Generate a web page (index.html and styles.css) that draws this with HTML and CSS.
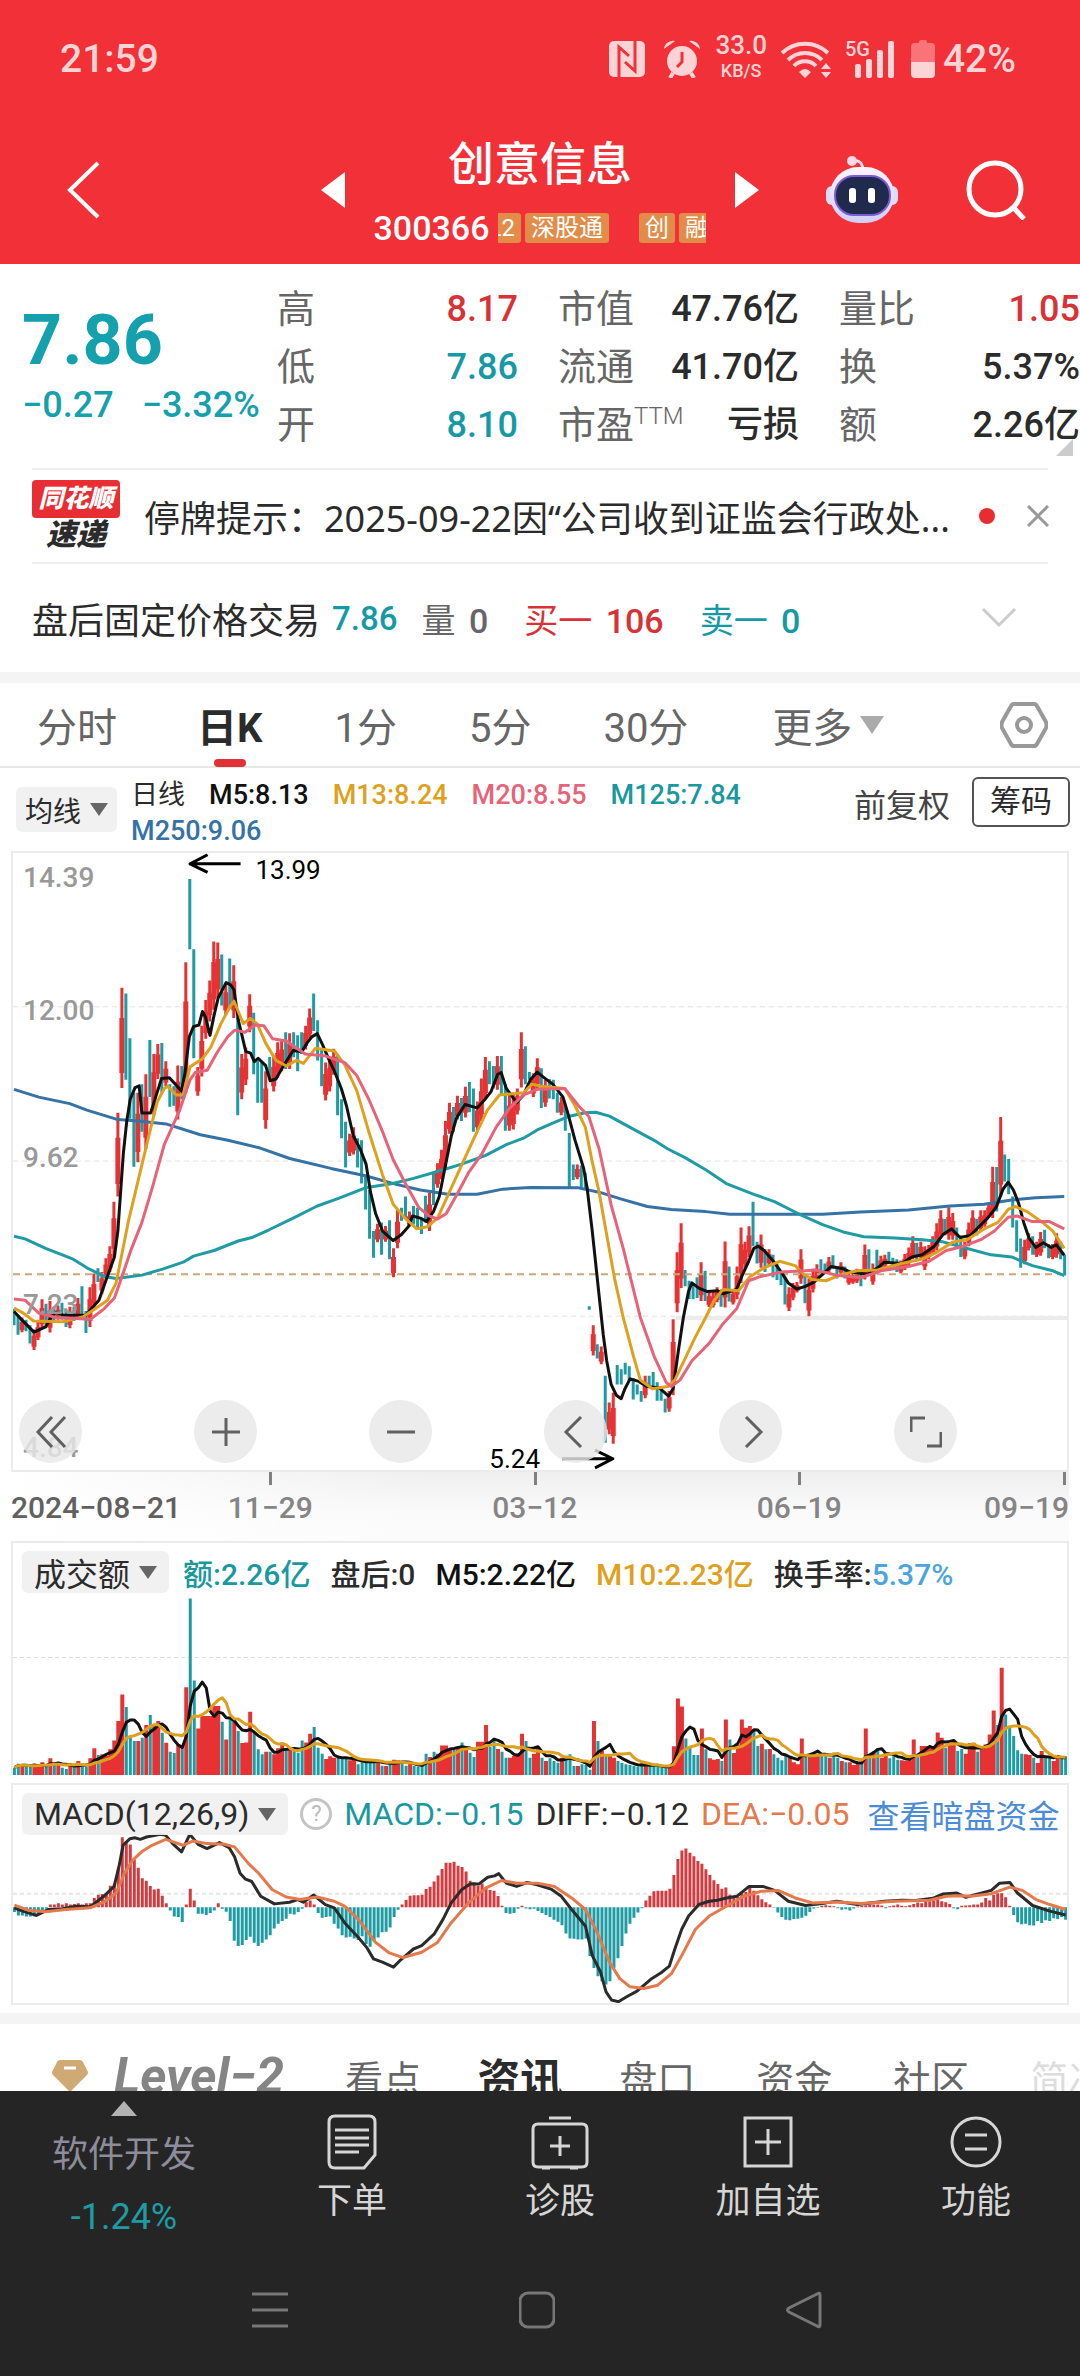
FILE: index.html
```html
<!DOCTYPE html>
<html lang="zh-CN">
<head>
<meta charset="utf-8">
<meta name="viewport" content="width=device-width, initial-scale=1">
<title>创意信息 300366</title>
<link rel="stylesheet" href="styles.css">
</head>
<body>
<header class="top">
  <div class="status">
    <span class="clock">21:59</span>
    <div class="status-icons">
      <svg width="36" height="36" viewBox="0 0 36 36"><rect width="36" height="36" rx="5" fill="#fdd4d6"/><path d="M10 36V6l10 9M26 0v30L16 21" fill="none" stroke="#f23038" stroke-width="3"/></svg>
      <svg class="alarm" width="38" height="38" viewBox="0 0 38 38" fill="#fdd4d6"><circle cx="19" cy="21" r="15"/><path d="M1 9a9 9 0 0 1 11-8zM37 9A9 9 0 0 0 26 1z"/><path d="M10 33l-3 5M28 33l3 5" stroke="#fdd4d6" stroke-width="4"/><path d="M19 12v10l-5 5" fill="none" stroke="#f23038" stroke-width="3"/></svg>
      <span class="speed"><b>33.0</b><span>KB/S</span></span>
      <svg class="wifi" width="52" height="38" viewBox="0 0 52 38" fill="none" stroke="#fdd4d6" stroke-width="4"><path d="M2 13a33 33 0 0 1 46 0M8 20a24 24 0 0 1 34 0M14 26a15 15 0 0 1 22 0"/><path d="M25 38l-6-6q6-6 12 0zM46 23l5 6H41zM46 38l5-6H41z" fill="#fdd4d6" stroke="none"/></svg>
      <svg class="signal" width="50" height="42" viewBox="0 -4 50 42"><g fill="#fdd4d6"><rect x="11" y="24" width="6" height="14" rx="2"/><rect x="22" y="19" width="6" height="19" rx="2"/><rect x="33" y="10" width="6" height="28" rx="2"/><rect x="44" y="1" width="6" height="37" rx="2"/></g><text x="1" y="16" class="net">5G</text></svg>
      <svg class="battery" width="24" height="38" viewBox="0 0 24 38"><path d="M8 2q0-2 2-2h4q2 0 2 2v1h4q4 0 4 4v15H0V7q0-4 4-4h4z" fill="#f87478"/><path d="M0 22h24v12q0 4-4 4H4q-4 0-4-4z" fill="#fdd4d6"/></svg>
      <span class="percent">42%</span>
    </div>
  </div>
  <div class="titlebar">
    <button class="plain back" aria-label="返回"><svg width="34" height="58" viewBox="0 0 34 58"><path d="M32 2L4 29l28 27" fill="none" stroke="#fff" stroke-width="4"/></svg></button>
    <div class="stock">
      <button class="plain" aria-label="上一只"><svg width="24" height="36" viewBox="0 0 24 36"><path d="M24 0v36L0 18z" fill="#fff"/></svg></button>
      <div class="stock-name">
        <h1>创意信息</h1>
        <div class="codes"><span class="code">300366</span>
          <div class="tags"><span class="tag first">L2</span><span class="tag">深股通</span><span class="tag late">创</span><span class="tag">融</span></div>
        </div>
      </div>
      <button class="plain" aria-label="下一只"><svg width="24" height="36" viewBox="0 0 24 36"><path d="M0 0v36l24-18z" fill="#fff"/></svg></button>
    </div>
    <div class="tools">
      <button class="plain" aria-label="智能助手"><svg width="72" height="68" viewBox="0 0 72 68">
        <defs><linearGradient id="shell" x1="0" y1="0" x2="0" y2="1"><stop offset="0" stop-color="#fbf4fc"/><stop offset="1" stop-color="#cfcff6"/></linearGradient></defs>
        <path d="M27 5q9-2 10 9" fill="none" stroke="#f6dcec" stroke-width="3"/><circle cx="26" cy="5" r="5" fill="#f5dcea"/>
        <rect x="0" y="30" width="12" height="19" rx="6" fill="#dcdcf8"/><rect x="60" y="30" width="12" height="19" rx="6" fill="#dcdcf8"/>
        <rect x="4" y="11" width="64" height="56" rx="28" fill="url(#shell)"/><rect x="9" y="20" width="55" height="39" rx="19" fill="#1f2a4d" stroke="#7b5bd6" stroke-width="2"/>
        <rect x="23" y="32" width="7" height="15" rx="3" fill="#fff"/><rect x="42" y="32" width="7" height="15" rx="3" fill="#fff"/></svg></button>
      <button class="plain" aria-label="搜索"><svg width="60" height="60" viewBox="0 0 60 60" fill="none" stroke="#fff"><circle cx="29" cy="29" r="26" stroke-width="5"/><path d="M47 47l11 12" stroke-width="5"/></svg></button>
    </div>
  </div>
</header>

<main>
  <section class="quote">
    <div class="price"><strong>7.86</strong><div class="change"><span>−0.27</span><span>−3.32%</span></div></div>
    <dl>
      <div><dt>高</dt><dd class="up">8.17</dd></div>
      <div><dt>低</dt><dd class="down">7.86</dd></div>
      <div><dt>开</dt><dd class="down">8.10</dd></div>
    </dl>
    <dl>
      <div><dt>市值</dt><dd>47.76亿</dd></div>
      <div><dt>流通</dt><dd>41.70亿</dd></div>
      <div><dt>市盈<sup>TTM</sup></dt><dd>亏损</dd></div>
    </dl>
    <dl>
      <div><dt>量比</dt><dd class="up">1.05</dd></div>
      <div><dt>换</dt><dd>5.37%</dd></div>
      <div><dt>额</dt><dd>2.26亿</dd></div>
    </dl>
    <i class="corner"></i>
  </section>

  <section class="notice">
    <div class="brand"><span class="brand-top">同花顺</span><span class="brand-bottom">速递</span></div>
    <a class="notice-text" href="#notice">停牌提示：2025-09-22因“公司收到证监会行政处...</a>
    <i class="dot"></i>
    <button class="plain" aria-label="关闭"><svg width="22" height="22" viewBox="0 0 22 22"><path d="M1 1l20 20M21 1L1 21" stroke="#999" stroke-width="3"/></svg></button>
  </section>

  <section class="after">
    <span class="after-title">盘后固定价格交易</span><span class="down med">7.86</span>
    <span class="after-item gray">量 <b>0</b></span>
    <span class="after-item up">买一 <b>106</b></span>
    <span class="after-item down">卖一 <b>0</b></span>
    <button class="plain expand" aria-label="展开"><svg width="36" height="22" viewBox="0 0 36 22"><path d="M2 2l16 16L34 2" fill="none" stroke="#ccc" stroke-width="3"/></svg></button>
  </section>

  <nav class="periods">
    <button class="plain p-time">分时</button>
    <button class="plain p-day active">日K</button>
    <button class="plain">1分</button>
    <button class="plain">5分</button>
    <button class="plain">30分</button>
    <button class="plain more">更多<i class="tri light"></i></button>
    <button class="plain gear" aria-label="设置"><svg width="48" height="46" viewBox="0 0 48 46" fill="none" stroke="#999" stroke-width="4"><path d="M14 2h20q2 0 3 2l9 16q1 3 0 6l-9 16q-1 2-3 2H14q-2 0-3-2L2 26q-1-3 0-6l9-16q1-2 3-2z"/><circle cx="24" cy="23" r="7"/></svg></button>
  </nav>

  <section class="averages">
    <button class="pill small">均线<i class="tri"></i></button>
    <div class="legend">
      <span>日线</span><span class="m5">M5:8.13</span><span class="m13">M13:8.24</span><span class="m20">M20:8.55</span><span class="m125">M125:7.84</span><span class="m250">M250:9.06</span>
    </div>
    <button class="plain adjust">前复权</button>
    <button class="chips">筹码</button>
  </section>

  <section class="panel kline">
    <svg id="kline" class="plot" viewBox="35 5 3066 1428" preserveAspectRatio="none"></svg>
    <span class="scale s1">14.39</span><span class="scale s2">12.00</span><span class="scale s3">9.62</span><span class="scale s4">7.23</span><span class="scale s5">4.84</span>
    <span class="extreme high">13.99</span><span class="extreme low">5.24</span>
    <div class="controls">
      <button aria-label="最早"><svg width="32" height="32" viewBox="0 0 32 32"><path d="M17 1L3 16l14 15M30 1L16 16l14 15"/></svg></button>
      <button aria-label="放大"><svg width="32" height="32" viewBox="0 0 32 32"><path d="M2 16h28M16 2v28"/></svg></button>
      <button aria-label="缩小"><svg width="32" height="32" viewBox="0 0 32 32"><path d="M2 16h28"/></svg></button>
      <button aria-label="左移"><svg width="32" height="32" viewBox="0 0 32 32"><path d="M21 1L6 16l15 15"/></svg></button>
      <button aria-label="右移"><svg width="32" height="32" viewBox="0 0 32 32"><path d="M11 1l15 15-15 15"/></svg></button>
      <button aria-label="全屏"><svg width="32" height="32" viewBox="0 0 32 32"><path d="M1 16V2h14M31 16v14H17"/></svg></button>
    </div>
  </section>
  <div class="dates"><span class="start">2024−08−21</span><span>11−29</span><span>03−12</span><span>06−19</span><span class="end">09−19</span></div>

  <section class="panel volume">
    <svg id="volume" class="plot" viewBox="18 65 1532 697" preserveAspectRatio="none"></svg>
    <div class="readout">
      <button class="pill">成交额<i class="tri"></i></button>
      <span class="m125">额:2.26亿</span><span>盘后:0</span><span class="m5">M5:2.22亿</span><span class="m13">M10:2.23亿</span><span>换手率:<em>5.37%</em></span>
    </div>
  </section>

  <section class="panel macd">
    <svg id="macd" class="plot" viewBox="18 42 1532 662" preserveAspectRatio="none"></svg>
    <div class="readout tight">
      <button class="pill">MACD(12,26,9)<i class="tri"></i></button>
      <button class="help" aria-label="说明">?</button>
      <span class="m125">MACD:−0.15</span><span>DIFF:−0.12</span><span class="dea">DEA:−0.05</span><a href="#dark">查看暗盘资金</a>
    </div>
  </section>

  <nav class="sections">
    <svg width="36" height="32" viewBox="0 0 36 32"><path d="M8 0h20q2 0 3 2l5 10q0 2-1 3L18 32 1 15q-1-1-1-3L5 2q1-2 3-2z" fill="#d0aa74"/><path d="M12 8h12" stroke="#fff" stroke-width="3"/></svg>
    <a class="level" href="#level2">Level−2</a>
    <a href="#view">看点</a><a class="current" href="#news">资讯</a><a href="#book">盘口</a><a href="#funds">资金</a><a href="#forum">社区</a><a class="fade" href="#profile">简况</a>
  </nav>
</main>

<footer>
  <div class="actions">
    <a class="sector" href="#sector"><i class="peak"></i><span>软件开发</span><b>-1.24%</b></a>
    <button class="plain"><svg width="50" height="56" viewBox="0 0 50 56"><path d="M8 2h34q6 0 6 6v33L37 54H8q-6 0-6-6V8q0-6 6-6z"/><path d="M8 16h34M8 24h34M8 31h34M8 38h24"/></svg>下单</button>
    <button class="plain"><svg width="58" height="56" viewBox="0 0 58 56"><path d="M18 4h22M7 10h44q5 0 5 5v33q0 5-5 5H7q-5 0-5-5V15q0-5 5-5zM11 54h8M39 54h8M29 22v20M19 32h20"/></svg>诊股</button>
    <button class="plain"><svg width="50" height="56" viewBox="0 0 50 56"><path d="M2 4h46v48H2zM25 15v26M12 28h26"/></svg>加自选</button>
    <button class="plain"><svg width="54" height="56" viewBox="0 0 54 56"><circle cx="27" cy="28" r="24"/><path d="M16 21h22M16 35h22"/></svg>功能</button>
  </div>
  <div class="system">
    <button class="plain" aria-label="最近任务"><svg width="36" height="38" viewBox="0 0 36 38"><path d="M0 3h36M0 19h36M0 35h36"/></svg></button>
    <button class="plain" aria-label="主屏幕"><svg width="36" height="38" viewBox="0 0 36 38"><rect x="1" y="2" width="34" height="34" rx="8"/></svg></button>
    <button class="plain" aria-label="后退"><svg width="36" height="38" viewBox="0 0 36 38"><path d="M34 4v30q0 3-3 1L3 21q-3-2 0-4L31 3q3-2 3 1z"/></svg></button>
  </div>
</footer>
<script src="charts.js"></script>
</body>
</html>
```
FILE: styles.css
```css
* { box-sizing: border-box; }
body {
  margin: 0;
  height: 100vh;
  display: flex;
  flex-direction: column;
  background: #fff;
  color: #2b2b2b;
  font-family: Roboto, "Noto Sans CJK SC", sans-serif;
  font-size: 36px;
}
h1, dl, dd { margin: 0; }
a { color: inherit; text-decoration: none; }
button { font: inherit; color: inherit; cursor: pointer; }
svg { display: block; flex: none; }
.plain { border: 0; padding: 0; background: none; }
.up { color: #d93236; }
.down { color: #1499a5; }

.top { flex: none; background: #f23038; color: #fff; }
.status { display: flex; justify-content: space-between; align-items: center; height: 118px; padding: 0 64px 0 60px; color: #fdd4d6; }
.clock { font-size: 39px; font-weight: 500; }
.status-icons { display: flex; align-items: center; }
.alarm { margin-left: 18px; }
.speed { display: flex; flex-direction: column; align-items: center; margin-left: 14px; font-size: 18px; line-height: 22px; font-weight: 500; }
.speed b { font-size: 26px; line-height: 30px; font-weight: 500; margin-top: -6px; }
.wifi { margin-left: 13px; }
.signal { margin: -4px 0 0 12px; }
.net { font: 500 20px Roboto, sans-serif; fill: #fdd4d6; }
.battery { margin-left: 17px; }
.percent { margin-left: 8px; font-size: 39px; font-weight: 500; }
.titlebar { display: grid; grid-template-columns: 1fr auto 1fr; height: 146px; align-items: start; padding: 0 54px; }
.back { justify-self: start; margin: 43px 0 0 12px; }
.stock { display: flex; align-items: center; width: 438px; }
.stock-name { flex: 1; min-width: 0; display: flex; flex-direction: column; align-items: center; }
h1 { font-size: 46px; line-height: 60px; font-weight: 500; padding-top: 16px; }
.codes { display: flex; align-items: center; gap: 9px; height: 42px; margin: 13px 0 12px; }
.code { font-size: 34px; font-weight: 500; }
.tags { display: flex; width: 208px; overflow: hidden; gap: 4px; }
.tag { flex: none; padding: 0 6px; font-size: 24px; line-height: 30px; background: #e28c4a; border-radius: 3px; }
.tag.first { margin-left: -16px; }
.tag.late { margin-left: 26px; }
.tools { display: flex; justify-content: flex-end; gap: 68px; margin-top: 38px; }

main { flex: 1; min-height: 0; overflow-y: auto; scrollbar-width: none; }

.quote { position: relative; display: flex; gap: 40px; height: 204px; padding-top: 16px; }
.price { width: 237px; padding-left: 22px; color: #14a0ac; white-space: nowrap; }
.price strong { display: block; margin-top: 18px; font-size: 70px; line-height: 84px; font-weight: 700; }
.change { display: flex; gap: 28px; font-size: 36px; line-height: 46px; font-weight: 500; }
dl { flex: 1; }
dl div { display: flex; justify-content: space-between; line-height: 58px; white-space: nowrap; }
dt { font-size: 38px; color: #666; }
dd { font-size: 36px; font-weight: 500; }
sup { font-size: 24px; font-weight: 300; line-height: 1; }
.corner { position: absolute; right: 7px; bottom: 12px; border-left: 17px solid transparent; border-bottom: 17px solid #ccc; }

.notice { display: flex; align-items: center; height: 96px; margin: 0 32px; border: solid #eee; border-width: 2px 0; }
.brand { width: 88px; font-style: italic; font-weight: 900; text-align: center; }
.brand-top { display: block; font-size: 25px; line-height: 38px; color: #fff; background: #e82e33; border-radius: 4px; }
.brand-bottom { display: block; font-size: 30px; line-height: 34px; }
.notice-text { flex: 1; margin-left: 24px; white-space: nowrap; font-family: "Noto Sans", "Noto Sans CJK SC", sans-serif; }
.dot { width: 16px; height: 16px; margin-right: 32px; border-radius: 50%; background: #e92c30; }
.notice button { margin-right: -1px; }

.after { display: flex; align-items: center; height: 108px; padding: 0 63px 0 32px; white-space: nowrap; }
.med { margin-left: 12px; font-size: 33px; font-weight: 500; }
.after-item { margin-left: 24px; font-size: 34px; }
.after-item + .after-item { margin-left: 36px; }
.after-item b { margin-left: 5px; font-weight: 500; }
.gray { color: #666; }
.expand { margin-left: auto; }

.periods { display: flex; align-items: center; height: 96px; padding: 0 32px 0 37px; border-top: 11px solid #f4f4f4; border-bottom: 2px solid #e8e8e8; font-size: 40px; color: #666; }
.periods button + button { margin-left: 72px; }
.periods .p-day { margin-left: 80px; }
.active { position: relative; color: #2b2b2b; font-weight: 700; }
.active::after { content: ""; position: absolute; left: 50%; top: 63px; width: 32px; height: 8px; margin-left: -16px; border-radius: 4px; background: #e03236; }
.periods .more { display: flex; align-items: center; gap: 8px; margin-left: 84px; }
.periods .gear { margin-left: auto; }
.tri { display: inline-block; border: solid transparent; border-width: 13px 9px 0; border-top-color: #666; }
.tri.light { border-width: 18px 12px 0; border-top-color: #aaa; }

.averages { display: flex; align-items: flex-start; height: 83px; padding: 9px 10px 0 16px; white-space: nowrap; }
.pill { display: flex; align-items: center; gap: 9px; height: 42px; padding: 0 12px; border: 0; border-radius: 6px; background: rgba(240, 240, 240, .92); font-size: 32px; }
.pill.small { height: 45px; margin-top: 10px; padding: 0 9px; font-size: 28px; }
.legend { flex: 1; display: flex; flex-wrap: wrap; column-gap: 24px; margin-left: 14px; font-size: 27px; line-height: 36px; font-weight: 500; }
.legend span:first-child { font-weight: 400; }
.adjust { margin: 6px 22px 0; font-size: 32px; line-height: 46px; color: #444; }
.chips { height: 50px; padding: 0 16px; border: 2px solid #555; border-radius: 6px; background: #fff; font-size: 31px; line-height: 40px; }
.m5 { color: #111; }
.m13 { color: #dea01d; }
.m20 { color: #e7637a; }
.m125 { color: #1998a0; }
.m250 { color: #3572a5; }

.panel { position: relative; display: grid; margin: 0 11px; border: 2px solid #ebebeb; }
.plot { grid-area: 1 / 1; width: 100%; height: 100%; }
.plot * { vector-effect: non-scaling-stroke; fill: none; stroke-linejoin: round; }
.kline { height: 621px; }
.scale { position: absolute; left: 10px; font-size: 28px; line-height: 32px; font-weight: 500; color: #999; }
.s1 { top: 9px; }
.s2 { top: 142px; }
.s3 { top: 289px; }
.s4 { top: 436px; }
.s5 { top: 579px; }
.extreme { position: absolute; font-size: 26px; line-height: 30px; color: #000; }
.high { left: 23%; top: 2px; }
.low { right: 50%; bottom: -4px; }
.controls { position: absolute; left: 6px; right: 110px; bottom: 7px; display: flex; justify-content: space-between; }
.controls button { display: grid; place-items: center; width: 63px; height: 63px; padding: 0; border: 0; border-radius: 50%; background: rgba(232, 232, 232, .82); }
.controls svg { fill: none; stroke: #606060; stroke-width: 3; }
.dates { display: grid; grid-template-columns: 16% 17% 33% 17% 1fr; height: 69px; margin: 0 11px; background: linear-gradient(90deg, #fff, transparent 40%), linear-gradient(#efefef, #fafafa 60%, #fcfcfc); font-size: 30px; line-height: 72px; font-weight: 500; color: #858585; text-align: center; white-space: nowrap; }
.dates span { position: relative; }
.dates span + span::before { content: ""; position: absolute; left: 50%; top: 0; width: 3px; height: 13px; margin-left: -1px; background: #808080; }
.dates .end::before { left: auto; right: 3px; }
.start { color: #606060; text-align: left; }
.end { text-align: right; }

.volume { height: 234px; border-bottom: 0; }
.readout { grid-area: 1 / 1; z-index: 1; display: flex; align-items: center; align-self: start; gap: 20px; height: 42px; margin: 8px 0 0 9px; font-size: 30px; white-space: nowrap; }
.readout .pill + span { margin-left: -6px; }
.readout span { font-weight: 500; }
em { font-style: normal; color: #4aa5de; }
.macd { height: 222px; margin-top: 8px; }
.tight { gap: 12px; font-size: 32px; }
.tight span, .tight a { font-weight: 400; }
.tight a { color: #4b8bd8; margin-left: 6px; }
.help { width: 32px; height: 32px; padding: 0; border: 3px solid #c4c4c4; border-radius: 50%; background: #fff; color: #bbb; font-size: 22px; line-height: 24px; }
.dea { color: #e5794c; }

.sections { display: flex; align-items: center; height: 120px; margin-top: 8px; padding: 0 0 12px 52px; border-top: 11px solid #f4f4f4; font-size: 38px; color: #666; white-space: nowrap; overflow: hidden; }
.sections svg { margin-top: 7px; }
.sections a { margin-left: 61px; padding-top: 7px; }
.sections .level { margin-left: 26px; font: italic 700 50px Roboto, sans-serif; color: #858585; }
.sections .current { margin-left: 56px; font-size: 43px; font-weight: 700; color: #2b2b2b; }
.sections .current + a { margin-left: 56px; }
.sections .fade { color: #ddd; }

footer { flex: none; height: 285px; background: #252525; color: #d6d6d6; }
.actions { display: grid; grid-template-columns: 248px 1fr 1fr 1fr 1fr; height: 152px; }
.actions > * { display: flex; flex-direction: column; align-items: center; font-size: 35px; line-height: 46px; }
.actions button { justify-content: flex-start; padding-top: 23px; gap: 9px; }
.actions svg { fill: none; stroke: #d6d6d6; stroke-width: 3; }
.sector { color: #8c8c9c; padding-top: 10px; }
.peak { border: solid transparent; border-width: 0 13px 15px; border-bottom-color: #b3b3b3; }
.sector span { margin-top: 16px; font-size: 36px; }
.sector b { margin-top: 16px; font: 400 36px/46px Roboto, sans-serif; color: #1f9ba4; }
.system { display: flex; justify-content: space-between; padding: 48px 258px 0 252px; }
.system svg { fill: none; stroke: #777; stroke-width: 3; }
```
FILE: charts.js
```js
const RED = "#e63233", TEAL = "#1f9ba3";

// One entry per trading day: direction, top of the bar, bottom of the bar.
const candles = `t1060-1098 t1075-1120 r1080-1114 t1085-1112 t1098-1140 r1108-1155 r1090-1132 r1038-1105 t1048-1100 r1042-1115
t1055-1090 r1052-1085 t1046-1085 t1060-1102 r1055-1105 t1055-1088 r1035-1080 t1008-1080 t1065-1116 r1010-1102
r978-1060 t966-998 r975-1025 r943-990 r915-975 r812-940 r606-800 r317-549 t330-530 t434-620
t560-731 r560-721 t540-650 r517-690 t438-570 r470-612 r447-528 t445-560 r487-545 t540-592
t545-590 r497-622 t498-575 r258-560 t65-228 t228-480 r500-567 r405-522 r345-435 r300-395
r210-368 r212-340 t240-358 r305-380 t249-365 r265-387 t385-612 r470-575 r455-542 r332-420
t375-517 t485-583 t490-583 r510-643 t477-530 r475-557 r443-525 r438-510 t420-505 r422-505
t420-478 t427-510 t420-470 r405-460 r365-435 t330-417 t392-485 t460-545 r490-578 r480-557
r458-518 t470-612 t575-665 t627-733 r655-706 r640-703 t665-733 t670-770 t750-830 t785-898
t880-942 r863-906 t860-935 r868-905 t855-945 r920-987 r832-920 t826-856 t800-850 r835-870
t822-865 t826-875 t850-887 t798-860 r792-880 t745-820 r723-780 r692-760 r625-735 r583-655
t593-650 r567-622 t572-625 r546-617 t535-605 t550-650 r580-650 r527-625 r477-575 t487-540
t498-550 r475-553 t475-565 t540-648 r565-648 r560-645 r550-610 r420-548 t452-540 t512-530
r515-570 r480-550 t503-595 r530-592 t528-573 t530-575 t560-606 r570-612 t590-648 t653-780
t726-762 r726-760 t728-780 t745-785 t1054-1062 r1098-1168 t1142-1175 r1147-1188 t1215-1370 r1277-1350
r1254-1372 t1190-1235 t1200-1235 t1185-1212 t1193-1225 t1220-1270 t1235-1258 t1250-1275 r1215-1267 t1215-1240
t1206-1245 t1230-1273 t1245-1273 t1268-1300 r1250-1298 r1084-1260 r929-1068 r862-1012 t970-1008 t995-1037
t1005-1038 t987-1035 r952-1042 t972-1042 r1020-1056 r1020-1057 r1010-1045 t1015-1055 r904-1057 t962-1043
r1015-1050 r962-1038 r872-1000 r905-965 r869-940 t812-915 t905-955 r888-965 t922-975 r922-960
t935-987 t955-993 t975-1005 t985-1050 r1010-1065 r1000-1040 r998-1022 r922-1002 t980-1047 r990-1077
r967-1022 r957-995 t945-985 t955-980 r940-975 t936-968 t965-990 r952-980 t962-990 r975-1004
r978-1002 r967-1000 t970-1008 r911-992 t922-975 r955-1004 t923-980 r937-975 r935-965 t928-955
t942-965 t945-975 r948-978 r933-970 r918-960 r892-945 t907-950 r905-945 r915-970 r912-945
r892-935 r862-925 r832-895 t852-890 r825-900 r838-900 t872-912 t890-940 r905-945 r860-915
r832-890 t852-890 r832-880 r832-870 r815-850 r731-850 t732-835 r616-800 t703-765 t713-795
t800-872 t855-928 t897-965 r900-957 r885-925 t892-935 r905-940 r882-937 t877-920 t910-943
r910-945 r885-942 t905-945 t935-983`.split(/\s+/).map(s => {
  const [top, bottom] = s.slice(1).split("-").map(Number);
  return { up: s[0] === "r", top, bottom };
});

const volumes = [20,32,28,30,22,26,24,36,24,48, 30,34,20,16,34,22,40,24,22,48, 78,58,60,55,75,102,160,240,202,112,
100,100,110,148,178,145,160,125,95,68, 64,90,88,262,528,282,138,175,175,175, 205,205,158,105,170,165,130,94,96,188,
125,75,60,68,68,60,78,96,75,72, 70,65,102,96,122,142,80,62,46,54, 50,50,50,48,42,45,30,40,35,40,
44,36,26,25,36,44,42,36,26,32, 26,22,30,62,52,68,62,87,87,75, 78,80,96,78,65,52,98,98,148,82,
105,76,68,50,50,56,62,122,100,50, 62,80,50,40,48,40,35,50,56,60, 25,25,30,28,14,160,100,70,60,58,
50,40,34,30,28,26,22,36,28,25, 26,22,20,22,25,84,228,204,108,84, 58,58,138,75,48,44,46,40,165,105,
64,90,165,140,145,130,85,92,75,76, 60,50,42,60,50,36,30,108,58,62, 60,62,58,60,50,65,50,40,36,36,
28,34,36,138,56,65,78,50,65,48, 58,44,42,40,42,105,60,85,85,85, 82,126,110,80,95,98,70,76,62,94,
95,68,75,90,120,192,148,320,180,140, 115,72,62,60,58,50,34,70,54,50, 40,54,50,54];

const histogram = [-15,-25,-25,-28,-28,-28,-22,-14,-5,8, 8,12,8,12,8,10,12,8,12,12, 28,38,40,42,65,70,120,212,200,190,
145,120,88,80,64,54,56,35,12,-10, -28,-30,-45,8,56,20,-20,-20,-24,-18, -10,12,-5,-14,-42,-102,-118,-115,-100,-90,
-108,-118,-108,-98,-85,-65,-50,-42,-35,-20, -22,-15,-5,15,20,8,-18,-32,-30,-28, -50,-65,-85,-92,-90,-95,-100,-88,-112,-120,
-105,-92,-76,-75,-62,-30,-8,8,22,35, 36,36,38,55,62,78,96,116,135,135, 138,126,122,108,80,75,65,72,60,52,
50,34,4,-18,-20,-18,-5,4,-4,-6, -5,-12,-18,-24,-30,-38,-44,-55,-80,-95, -96,-98,-98,-95,-148,-185,-210,-225,-235,-225,
-185,-155,-118,-80,-50,-32,-16,-3,20,35, 48,50,50,50,56,98,146,172,178,165, 155,140,132,115,98,82,70,56,60,38,
30,32,42,46,64,50,36,24,15,8, -2,-16,-30,-38,-40,-36,-35,-32,-26,-15, -4,-2,4,6,4,3,-3,-8,-6,-10,
-4,2,4,6,8,8,8,5,-3,3, 5,8,4,3,6,10,14,12,24,18, 20,24,18,15,10,-3,-6,4,5,6,
8,8,14,28,20,38,42,42,30,4, -24,-46,-52,-50,-55,-56,-42,-48,-40,-42, -34,-36,-30,-38];

const priceLines = {
  "#3572a5": "38,552 110,570 200,585 250,600 340,622 400,625 480,632 580,657 660,670 750,687 840,712 960,735 1060,752 1150,772 1220,785 1300,795 1385,795 1460,783 1540,779 1680,780 1740,790 1800,805 1880,823 1950,830 2050,835 2120,841 2390,841 2500,836 2640,831 2760,822 2860,818 2940,808 3010,803 3093,800",
  "#1f9ba3": "38,892 70,898 130,920 210,945 250,965 300,985 335,990 410,982 470,968 530,952 560,938 620,925 690,903 730,895 780,877 850,850 920,822 980,805 1060,780 1140,770 1200,758 1270,742 1340,725 1410,705 1470,680 1520,665 1560,646 1600,632 1650,615 1700,606 1730,605 1770,614 1830,640 1900,670 1940,690 1990,710 2050,738 2110,770 2190,795 2250,812 2320,840 2390,865 2450,882 2510,893 2600,896 2680,900 2740,905 2800,918 2880,935 2940,940 3000,960 3060,972 3093,983",
  "#111": "38,1066 60,1085 96,1114 130,1102 145,1080 160,1068 180,1074 247,1075 265,1058 285,1040 305,995 330,940 340,880 348,790 356,700 366,625 376,575 390,548 402,544 410,607 435,607 450,570 467,527 490,525 525,556 535,515 548,430 560,407 576,403 586,372 595,385 608,427 620,380 632,340 655,305 668,310 678,322 690,390 712,464 726,468 737,488 748,480 770,497 783,532 800,528 820,500 850,462 875,465 890,445 905,430 920,423 935,448 955,485 970,510 990,550 1005,590 1025,660 1045,690 1062,725 1075,790 1090,840 1110,880 1141,902 1165,888 1185,870 1197,845 1220,850 1238,858 1258,835 1275,800 1290,740 1310,660 1325,618 1350,587 1385,595 1405,578 1425,558 1445,517 1455,513 1470,550 1500,583 1520,565 1540,530 1560,512 1575,522 1605,540 1635,570 1650,610 1670,670 1695,735 1705,780 1720,880 1740,1030 1752,1120 1762,1180 1775,1235 1790,1260 1804,1268 1815,1245 1830,1222 1855,1228 1880,1240 1915,1243 1942,1262 1955,1245 1970,1160 1985,1080 2000,1020 2010,1000 2030,1012 2055,1020 2085,1018 2100,1025 2140,1015 2155,985 2175,950 2190,920 2203,915 2220,925 2245,948 2270,975 2290,1000 2315,1014 2340,1008 2365,998 2390,980 2415,962 2450,967 2470,975 2520,980 2550,965 2570,952 2620,955 2650,940 2680,935 2715,915 2740,888 2765,875 2790,895 2820,890 2845,870 2870,850 2895,825 2915,783 2930,767 2945,785 2960,815 2975,860 2990,895 3010,918 3032,907 3055,918 3070,912 3093,936",
  "#dea01d": "38,1058 65,1070 95,1088 180,1090 240,1078 270,1062 310,1040 335,1000 350,940 370,860 400,760 430,660 455,580 475,550 485,545 510,565 530,565 550,500 585,482 610,455 640,400 665,362 678,348 705,400 725,388 745,400 770,445 800,485 830,498 860,485 880,492 915,457 970,463 1000,495 1035,555 1070,650 1110,750 1141,818 1175,850 1210,875 1240,870 1270,850 1310,780 1350,710 1385,650 1415,600 1450,565 1490,562 1520,560 1545,540 1570,545 1640,550 1670,590 1700,640 1720,720 1740,790 1760,880 1785,990 1810,1080 1840,1170 1860,1225 1895,1245 1940,1240 1960,1225 1990,1175 2020,1125 2050,1080 2075,1040 2100,1015 2145,1018 2180,985 2220,965 2265,950 2310,960 2335,980 2360,992 2400,995 2440,982 2490,972 2550,970 2620,955 2680,945 2720,930 2770,905 2810,900 2860,875 2900,860 2930,830 2950,823 2985,835 3030,860 3060,880 3093,920",
  "#e7637a": "38,1037 70,1040 110,1070 160,1080 260,1084 300,1060 330,1035 350,990 380,920 410,860 440,780 475,680 520,600 550,530 565,513 600,508 630,465 660,430 680,415 710,420 740,403 765,405 790,435 830,440 885,470 945,475 1000,490 1035,520 1070,575 1110,650 1141,715 1180,775 1215,825 1245,845 1270,852 1295,840 1330,790 1360,745 1400,700 1440,640 1480,595 1520,565 1560,552 1640,550 1680,590 1710,615 1740,690 1775,820 1810,920 1860,1080 1900,1170 1935,1230 1950,1240 1975,1225 2010,1180 2060,1140 2100,1095 2140,1060 2175,995 2210,985 2270,975 2340,972 2370,970 2430,982 2500,988 2560,972 2640,962 2700,950 2750,925 2800,915 2850,900 2890,880 2930,848 2955,845 3000,858 3050,858 3093,875"
};

const diff = "20,415 32,425 52,438 70,420 90,418 110,410 130,412 150,380 165,350 172,290 178,225 188,205 195,202 203,207 212,200 232,192 240,195 250,220 263,245 275,192 287,222 300,235 318,217 332,232 340,260 348,310 356,328 365,335 378,380 398,403 420,398 432,390 440,398 455,376 472,405 485,415 500,460 520,505 532,535 542,570 555,580 571,595 582,572 600,540 612,530 630,495 643,450 655,400 670,360 683,342 695,343 708,322 718,318 724,311 735,340 750,350 765,338 780,345 800,358 815,380 830,420 850,470 860,560 872,610 880,670 888,695 898,700 910,685 925,668 945,632 960,612 972,592 980,540 990,480 1000,440 1015,405 1030,395 1042,392 1055,385 1070,380 1088,350 1108,350 1125,362 1145,395 1170,408 1200,400 1215,395 1245,405 1285,395 1310,392 1330,393 1355,386 1370,373 1390,370 1403,383 1440,362 1452,340 1467,338 1478,370 1500,408 1525,425 1548,437";
const dea = "20,407 40,422 65,427 95,420 130,415 150,398 168,370 180,310 192,270 205,245 220,225 240,207 265,225 280,212 300,220 325,222 340,230 360,280 375,310 395,360 415,382 435,390 460,382 485,395 500,410 520,450 545,520 565,552 585,566 612,550 635,520 655,460 680,400 705,355 728,332 750,340 780,340 805,350 830,385 850,420 865,480 885,580 900,630 915,655 935,660 955,650 975,615 990,560 1010,480 1030,440 1055,410 1080,380 1105,365 1130,362 1155,385 1180,400 1215,397 1250,402 1300,395 1350,392 1375,380 1395,378 1410,380 1440,372 1467,352 1485,362 1505,390 1525,405 1548,420";

const path = (d, color, width, dash = "") =>
  `<path d="${d}" stroke="${color}" stroke-width="${width}" stroke-dasharray="${dash}"/>`;
const curve = (points, color, width = 3) => path("M" + points, color, width);
const average = (values, days) => values.map((_, i) => {
  const part = values.slice(Math.max(0, i - days + 1), i + 1);
  return part.reduce((a, b) => a + b) / part.length;
});

// Price chart
const priceX = i => 38 + 11.62 * i;
let wicksUp = "", bodiesUp = "", barsDown = "";
candles.forEach((c, i) => {
  const x = priceX(i), h = c.bottom - c.top;
  if (c.up) {
    wicksUp += `M${x} ${c.top}V${c.bottom}`;
    bodiesUp += `M${x} ${c.top + h * 0.3}V${c.bottom - h * 0.15}`;
  } else barsDown += `M${x} ${c.top}V${c.bottom}`;
});
document.getElementById("kline").innerHTML =
  [361, 718, 1077].map(y => path(`M35 ${y}H3101`, "#e2e2e2", 1, "5 4")).join("") +
  path("M1963 1081H3101", "#ebebeb", 4) +
  path(wicksUp, RED, 3) + path(bodiesUp, RED, 5) + path(barsDown, TEAL, 3) +
  path("M35 980H3101", "#c9a878", 2, "7 5") +
  Object.entries(priceLines).map(([color, points]) => curve(points, color)).join("") +
  path("M697 30H550M601 9L550 30L601 50", "#000", 3) +
  path("M1632 1407H1780M1728 1387L1780 1407L1728 1428", "#000", 3);

// Turnover chart
const subX = i => 20 + 5.81 * i;
let volUp = "", volDown = "";
volumes.forEach((v, i) => {
  const d = `M${subX(i)} 762V${760 - v}`;
  if (candles[i].up) volUp += d; else volDown += d;
});
const volLine = days => average(volumes, days).map((v, i) => `${subX(i)},${(760 - v).toFixed(0)}`).join(" ");
document.getElementById("volume").innerHTML =
  path("M18 409H1550", "#ddd", 1, "4 3") + path(volUp, RED, 4) + path(volDown, TEAL, 3) +
  curve(volLine(5), "#111") + curve(volLine(10), "#dea01d");

// MACD chart
let macdUp = "", macdDown = "";
histogram.forEach((v, i) => {
  const d = `M${subX(i)} 413V${413 - v}`;
  if (v > 0) macdUp += d; else macdDown += d;
});
document.getElementById("macd").innerHTML =
  path("M18 372H1550", "#e6e6e6", 2, "4 3") + path(macdUp, "#d13c40", 3) + path(macdDown, TEAL, 3) +
  curve(diff, "#2b2b2b") + curve(dea, "#e5794c");
```
